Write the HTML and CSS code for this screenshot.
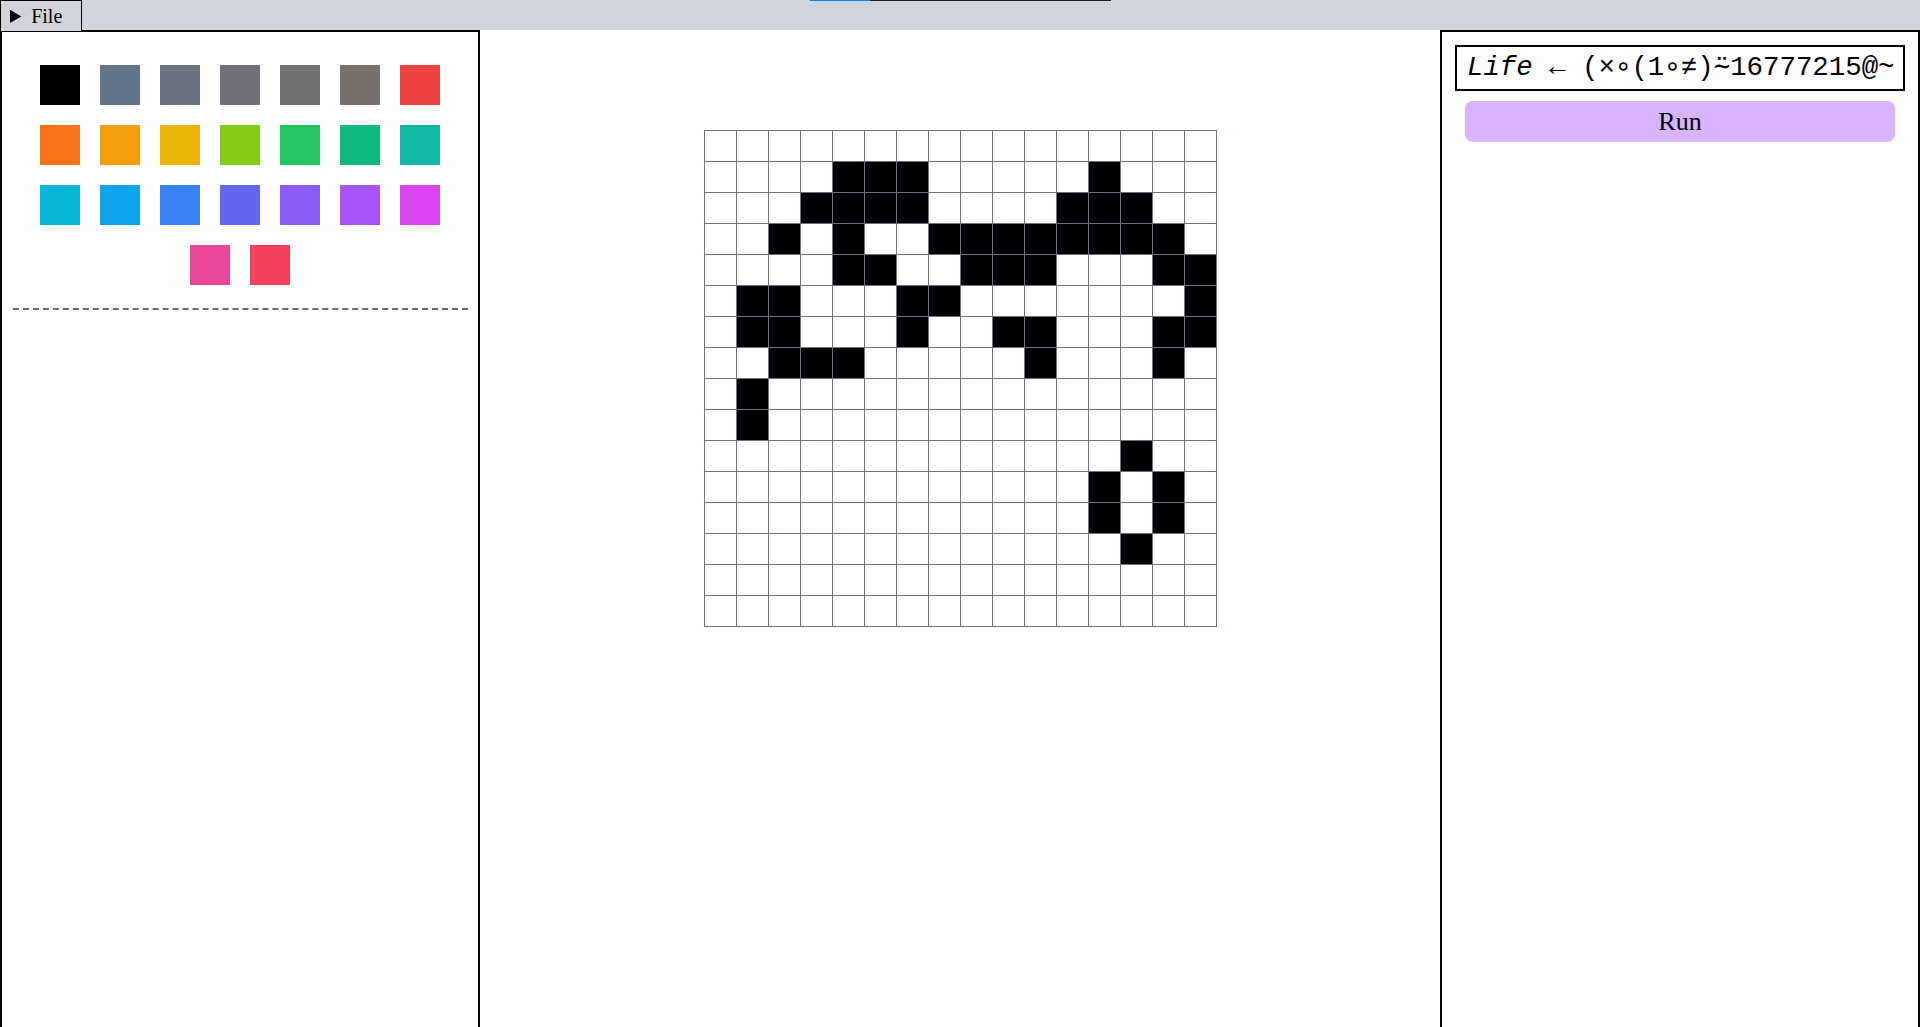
FILE: index.html
```html
<!DOCTYPE html>
<html lang="en">
<head>
<meta charset="utf-8">
<title>Life</title>
<link rel="stylesheet" href="styles.css">
</head>
<body>
<header class="topbar">
  <details class="file-menu">
    <summary>File</summary>
  </details>
  <div class="progress"><div class="progress-fill"></div></div>
  <div></div>
</header>
<main class="workspace">
  <aside class="panel side-panel">
    <div class="palette">
      <div class="swatch" style="background:#000000"></div>
      <div class="swatch" style="background:#64748b"></div>
      <div class="swatch" style="background:#6b7280"></div>
      <div class="swatch" style="background:#71717a"></div>
      <div class="swatch" style="background:#737373"></div>
      <div class="swatch" style="background:#78716c"></div>
      <div class="swatch" style="background:#ef4444"></div>
      <div class="swatch" style="background:#f97316"></div>
      <div class="swatch" style="background:#f59e0b"></div>
      <div class="swatch" style="background:#eab308"></div>
      <div class="swatch" style="background:#84cc16"></div>
      <div class="swatch" style="background:#22c55e"></div>
      <div class="swatch" style="background:#10b981"></div>
      <div class="swatch" style="background:#14b8a6"></div>
      <div class="swatch" style="background:#06b6d4"></div>
      <div class="swatch" style="background:#0ea5e9"></div>
      <div class="swatch" style="background:#3b82f6"></div>
      <div class="swatch" style="background:#6366f1"></div>
      <div class="swatch" style="background:#8b5cf6"></div>
      <div class="swatch" style="background:#a855f7"></div>
      <div class="swatch" style="background:#d946ef"></div>
      <div class="swatch" style="background:#ec4899"></div>
      <div class="swatch" style="background:#f43f5e"></div>
    </div>
    <div class="divider"></div>
  </aside>
  <section class="canvas">
    <div class="board">
      <div class="cell"></div><div class="cell"></div><div class="cell"></div><div class="cell"></div><div class="cell"></div><div class="cell"></div><div class="cell"></div><div class="cell"></div><div class="cell"></div><div class="cell"></div><div class="cell"></div><div class="cell"></div><div class="cell"></div><div class="cell"></div><div class="cell"></div><div class="cell"></div>
      <div class="cell"></div><div class="cell"></div><div class="cell"></div><div class="cell"></div><div class="cell on"></div><div class="cell on"></div><div class="cell on"></div><div class="cell"></div><div class="cell"></div><div class="cell"></div><div class="cell"></div><div class="cell"></div><div class="cell on"></div><div class="cell"></div><div class="cell"></div><div class="cell"></div>
      <div class="cell"></div><div class="cell"></div><div class="cell"></div><div class="cell on"></div><div class="cell on"></div><div class="cell on"></div><div class="cell on"></div><div class="cell"></div><div class="cell"></div><div class="cell"></div><div class="cell"></div><div class="cell on"></div><div class="cell on"></div><div class="cell on"></div><div class="cell"></div><div class="cell"></div>
      <div class="cell"></div><div class="cell"></div><div class="cell on"></div><div class="cell"></div><div class="cell on"></div><div class="cell"></div><div class="cell"></div><div class="cell on"></div><div class="cell on"></div><div class="cell on"></div><div class="cell on"></div><div class="cell on"></div><div class="cell on"></div><div class="cell on"></div><div class="cell on"></div><div class="cell"></div>
      <div class="cell"></div><div class="cell"></div><div class="cell"></div><div class="cell"></div><div class="cell on"></div><div class="cell on"></div><div class="cell"></div><div class="cell"></div><div class="cell on"></div><div class="cell on"></div><div class="cell on"></div><div class="cell"></div><div class="cell"></div><div class="cell"></div><div class="cell on"></div><div class="cell on"></div>
      <div class="cell"></div><div class="cell on"></div><div class="cell on"></div><div class="cell"></div><div class="cell"></div><div class="cell"></div><div class="cell on"></div><div class="cell on"></div><div class="cell"></div><div class="cell"></div><div class="cell"></div><div class="cell"></div><div class="cell"></div><div class="cell"></div><div class="cell"></div><div class="cell on"></div>
      <div class="cell"></div><div class="cell on"></div><div class="cell on"></div><div class="cell"></div><div class="cell"></div><div class="cell"></div><div class="cell on"></div><div class="cell"></div><div class="cell"></div><div class="cell on"></div><div class="cell on"></div><div class="cell"></div><div class="cell"></div><div class="cell"></div><div class="cell on"></div><div class="cell on"></div>
      <div class="cell"></div><div class="cell"></div><div class="cell on"></div><div class="cell on"></div><div class="cell on"></div><div class="cell"></div><div class="cell"></div><div class="cell"></div><div class="cell"></div><div class="cell"></div><div class="cell on"></div><div class="cell"></div><div class="cell"></div><div class="cell"></div><div class="cell on"></div><div class="cell"></div>
      <div class="cell"></div><div class="cell on"></div><div class="cell"></div><div class="cell"></div><div class="cell"></div><div class="cell"></div><div class="cell"></div><div class="cell"></div><div class="cell"></div><div class="cell"></div><div class="cell"></div><div class="cell"></div><div class="cell"></div><div class="cell"></div><div class="cell"></div><div class="cell"></div>
      <div class="cell"></div><div class="cell on"></div><div class="cell"></div><div class="cell"></div><div class="cell"></div><div class="cell"></div><div class="cell"></div><div class="cell"></div><div class="cell"></div><div class="cell"></div><div class="cell"></div><div class="cell"></div><div class="cell"></div><div class="cell"></div><div class="cell"></div><div class="cell"></div>
      <div class="cell"></div><div class="cell"></div><div class="cell"></div><div class="cell"></div><div class="cell"></div><div class="cell"></div><div class="cell"></div><div class="cell"></div><div class="cell"></div><div class="cell"></div><div class="cell"></div><div class="cell"></div><div class="cell"></div><div class="cell on"></div><div class="cell"></div><div class="cell"></div>
      <div class="cell"></div><div class="cell"></div><div class="cell"></div><div class="cell"></div><div class="cell"></div><div class="cell"></div><div class="cell"></div><div class="cell"></div><div class="cell"></div><div class="cell"></div><div class="cell"></div><div class="cell"></div><div class="cell on"></div><div class="cell"></div><div class="cell on"></div><div class="cell"></div>
      <div class="cell"></div><div class="cell"></div><div class="cell"></div><div class="cell"></div><div class="cell"></div><div class="cell"></div><div class="cell"></div><div class="cell"></div><div class="cell"></div><div class="cell"></div><div class="cell"></div><div class="cell"></div><div class="cell on"></div><div class="cell"></div><div class="cell on"></div><div class="cell"></div>
      <div class="cell"></div><div class="cell"></div><div class="cell"></div><div class="cell"></div><div class="cell"></div><div class="cell"></div><div class="cell"></div><div class="cell"></div><div class="cell"></div><div class="cell"></div><div class="cell"></div><div class="cell"></div><div class="cell"></div><div class="cell on"></div><div class="cell"></div><div class="cell"></div>
      <div class="cell"></div><div class="cell"></div><div class="cell"></div><div class="cell"></div><div class="cell"></div><div class="cell"></div><div class="cell"></div><div class="cell"></div><div class="cell"></div><div class="cell"></div><div class="cell"></div><div class="cell"></div><div class="cell"></div><div class="cell"></div><div class="cell"></div><div class="cell"></div>
      <div class="cell"></div><div class="cell"></div><div class="cell"></div><div class="cell"></div><div class="cell"></div><div class="cell"></div><div class="cell"></div><div class="cell"></div><div class="cell"></div><div class="cell"></div><div class="cell"></div><div class="cell"></div><div class="cell"></div><div class="cell"></div><div class="cell"></div><div class="cell"></div>
    </div>
  </section>
  <aside class="panel code-panel">
    <div class="code"><span class="var">Life</span> ← (×∘(1∘≠)⍨16777215@~</div>
    <button class="run" type="button">Run</button>
  </aside>
</main>
</body>
</html>
```
FILE: styles.css
```css
html, body {
  margin: 0;
  padding: 0;
}
body {
  font-family: "Liberation Serif", "Times New Roman", serif;
  color: #000;
  background: #fff;
  overflow: hidden;
}
.topbar {
  height: 30px;
  background: #d1d5db;
  display: grid;
  grid-template-columns: 1fr auto 1fr;
  align-items: start;
}
.file-menu {
  position: relative;
  z-index: 1;
  justify-self: start;
  width: 82px;
  height: 32px;
  box-sizing: border-box;
  border: 1px solid #000;
  background: #d1d5db;
}
.file-menu summary {
  font-size: 20px;
  line-height: 23px;
  padding: 4px 0 3px 9px;
  cursor: pointer;
}
.progress {
  width: 301px;
  height: 1px;
  background: #222222;
  display: flex;
}
.progress-fill {
  width: 60px;
  background: #0a84f0;
}
.workspace {
  display: grid;
  grid-template-columns: 1fr 2fr 1fr;
  height: calc(100vh - 30px);
}
.panel {
  border: 2px solid #000;
  border-bottom: 0;
  min-width: 0;
}
.palette {
  display: flex;
  flex-wrap: wrap;
  justify-content: center;
  padding: 23px 0 13px;
}
.swatch {
  width: 40px;
  height: 40px;
  margin: 10px;
}
.divider {
  border-top: 2px dashed #6b6b70;
  margin: 0 10px 0 11px;
}
.canvas {
  display: flex;
  justify-content: center;
  align-items: flex-start;
  padding-top: 100px;
}
.board {
  display: grid;
  grid-template-columns: repeat(16, 31px);
  grid-auto-rows: 30px;
  gap: 1px;
  background: #6b7280;
  border: 1px solid #6b7280;
}
.cell {
  background: #fff;
}
.cell.on {
  background: #000;
}
.code-panel {
  display: flex;
  flex-direction: column;
  padding: 13px 13px 0;
}
.code {
  border: 2px solid #000;
  padding: 6px 10px;
  font-family: "Liberation Mono", "DejaVu Sans Mono", monospace;
  font-size: 27.4px;
  line-height: 30px;
  white-space: nowrap;
  overflow: hidden;
}
.code .var {
  font-style: italic;
}
.run {
  margin: 10px 10px 0;
  height: 41px;
  border: 0;
  border-radius: 8px;
  background: #d8b4fe;
  font-family: "Liberation Serif", "Times New Roman", serif;
  font-size: 26px;
  color: #000;
  padding: 0;
}
```
